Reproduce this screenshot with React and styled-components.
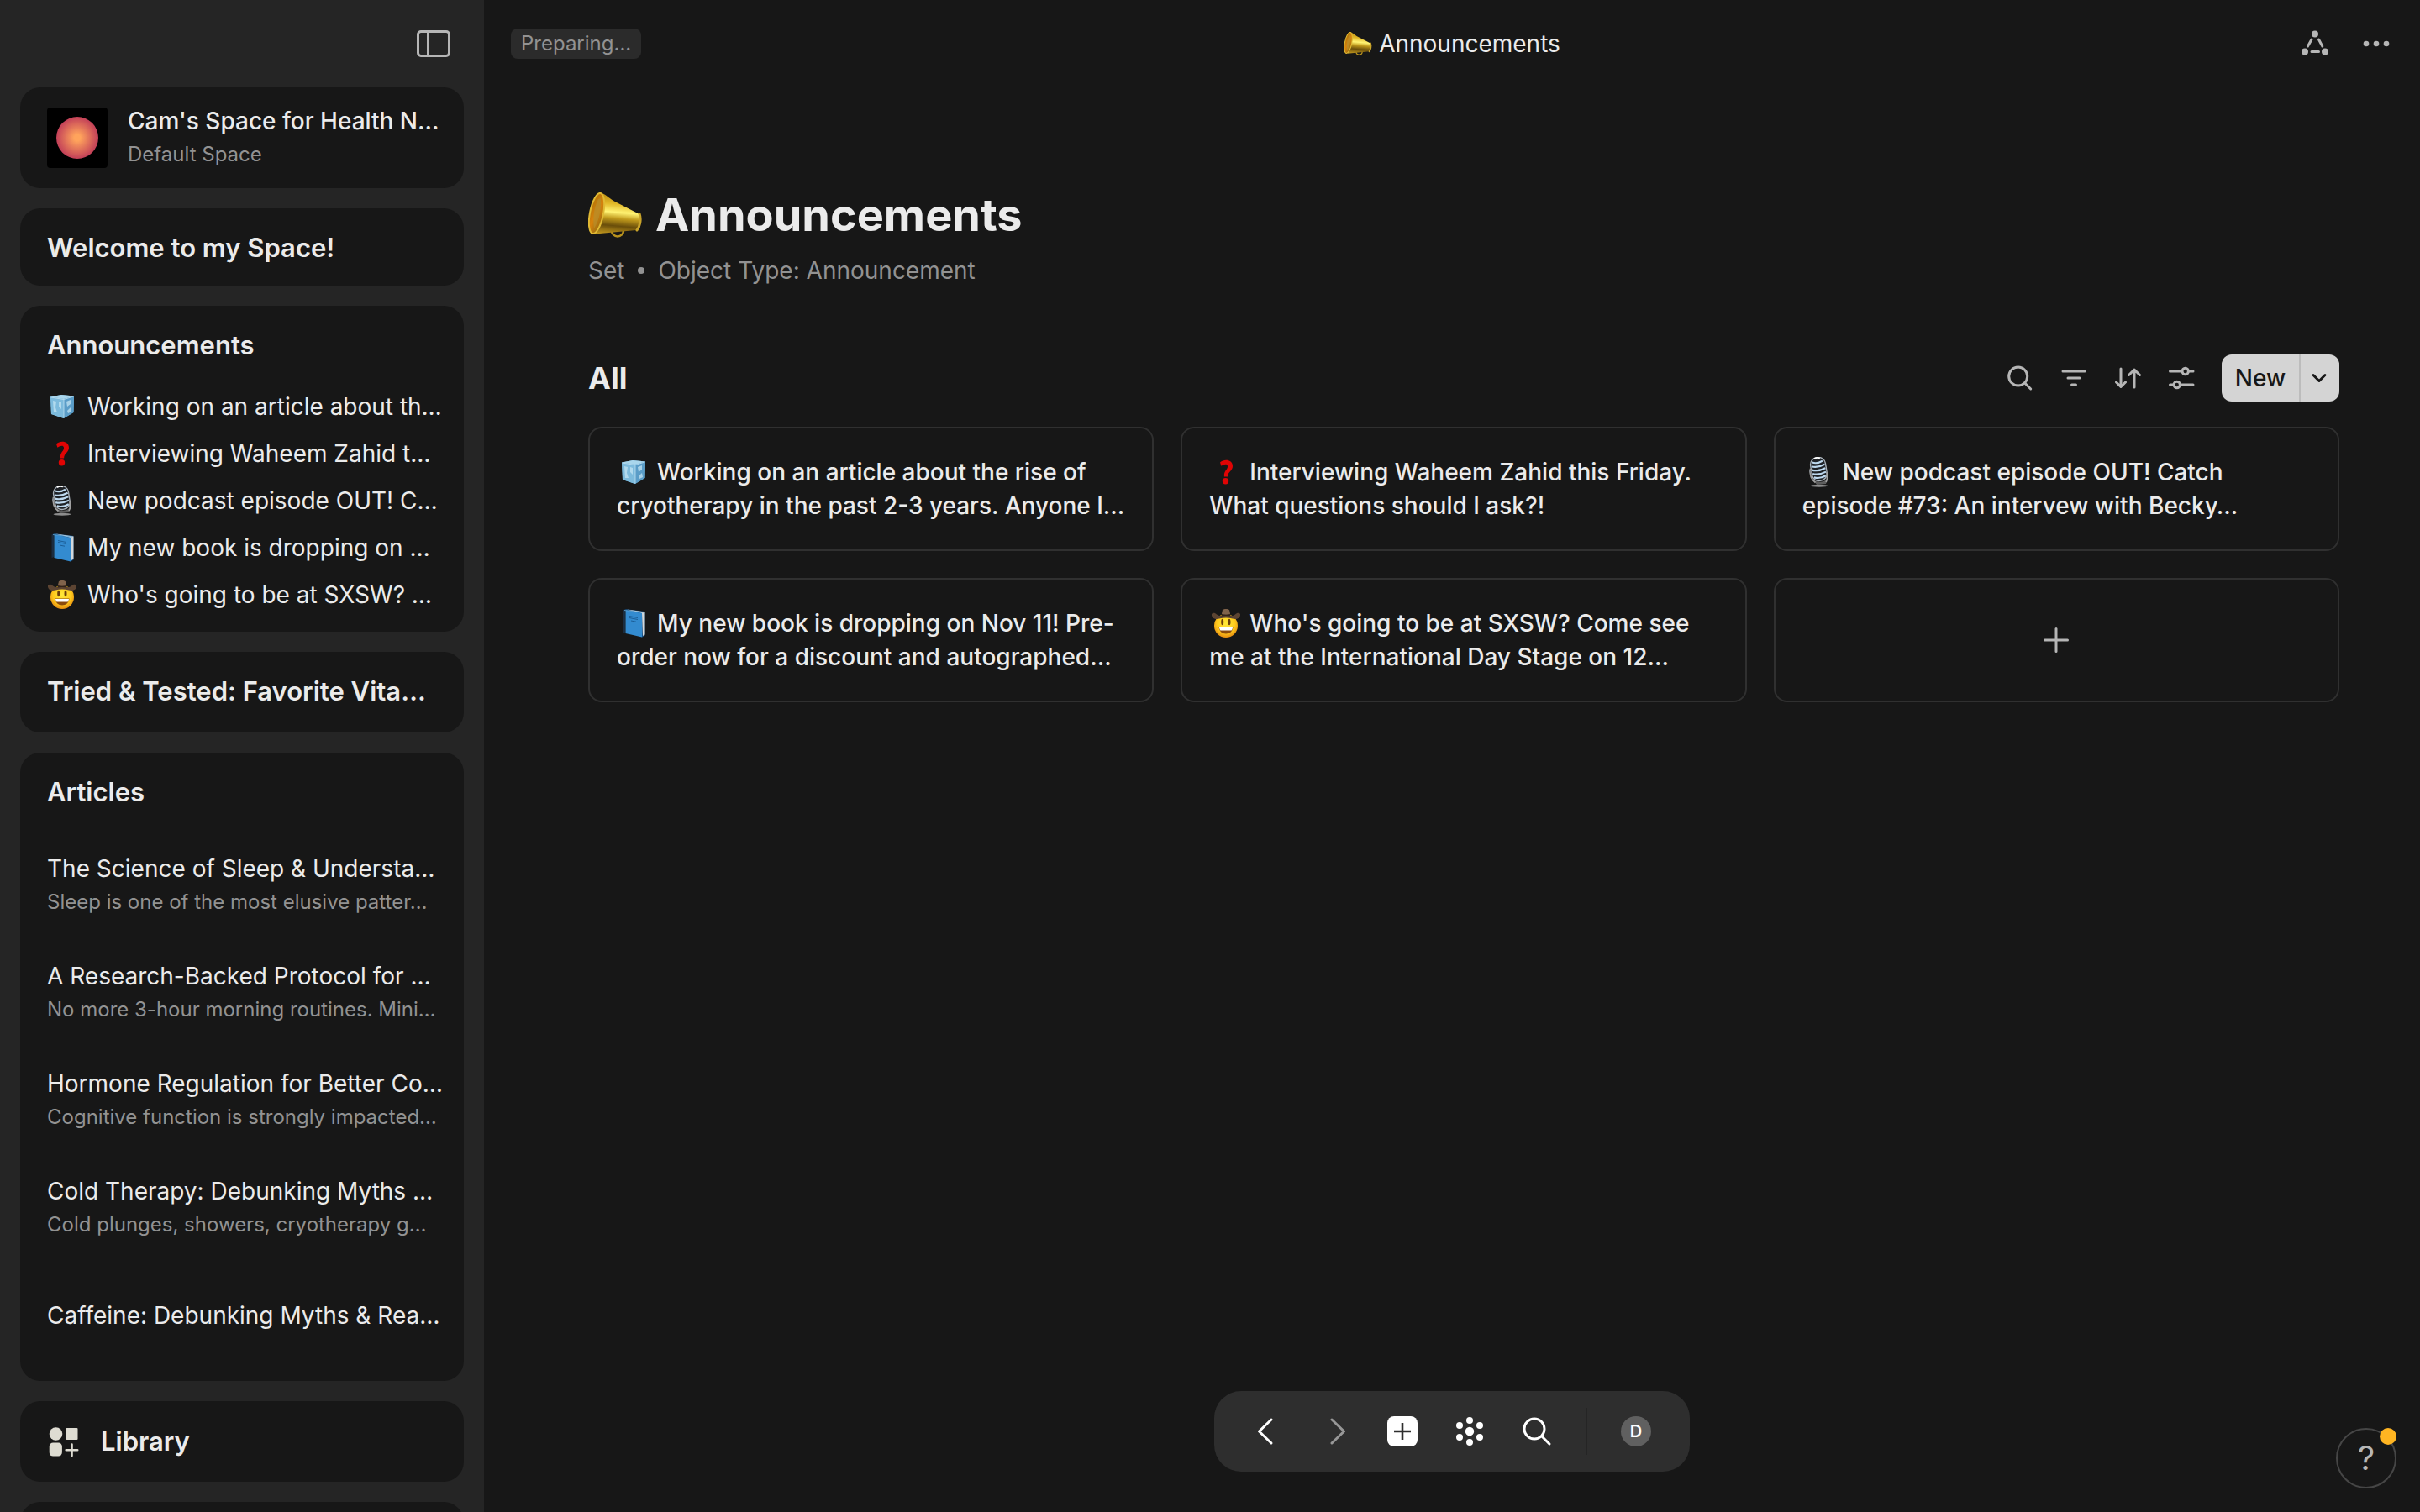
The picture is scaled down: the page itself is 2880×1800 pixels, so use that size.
import React from "react";
import styled, { createGlobalStyle } from "styled-components";

const GlobalStyle = createGlobalStyle`
  *, *::before, *::after { box-sizing: border-box; }
  body {
    margin: 0;
    background: #171717;
    color: #ebebeb;
    font-family: Inter, "Liberation Sans", sans-serif;
    font-size: 28px;
    line-height: 40px;
    -webkit-font-smoothing: antialiased;
  }
  h1, h2, h3, p, ul { margin: 0; padding: 0; }
  ul { list-style: none; }
  button { margin: 0; padding: 0; border: 0; background: none; color: inherit; font: inherit; cursor: pointer; }
  a { color: inherit; text-decoration: none; }
  svg { display: block; flex: none; }
`;

const Page = styled.div`
  display: flex;
  height: 100vh;
  overflow: hidden;
`;

const Sidebar = styled.aside`
  flex: none;
  width: 576px;
  background: #252525;
  overflow: hidden;
`;

const SidebarHead = styled.div`
  display: flex;
  align-items: center;
  justify-content: flex-end;
  height: 104px;
  padding: 0 40px;
  color: #b6b6b6;
`;

const Widgets = styled.div`
  display: flex;
  flex-direction: column;
  gap: 24px;
  padding: 0 24px;
`;

const Widget = styled.section`
  padding: 24px 20px ${(p) => p.$bottom || 24}px 32px;
  border-radius: 24px;
  background: #171717;
`;

const WidgetTitle = styled.h2`
  overflow: hidden;
  font-size: 31px;
  font-weight: 600;
  line-height: 46px;
  white-space: nowrap;
  text-overflow: ellipsis;
`;

const Truncated = styled.span`
  display: block;
  min-width: 0;
  overflow: hidden;
  white-space: nowrap;
  text-overflow: ellipsis;
`;

const SpaceLink = styled.a`
  display: flex;
  align-items: center;
  gap: 24px;
  height: 72px;
`;

const SpaceText = styled.div`
  min-width: 0;
`;

const SpaceName = styled(Truncated)`
  font-weight: 500;
`;

const Secondary = styled(Truncated)`
  color: #929292;
  font-size: 24px;
`;

const EmojiList = styled.ul`
  padding-top: 22px;
`;

const EmojiRow = styled.a`
  display: flex;
  align-items: center;
  gap: 12px;
  height: 56px;
`;

const ArticleList = styled.ul`
  padding-top: 24px;
`;

const ArticleRow = styled.a`
  display: flex;
  flex-direction: column;
  justify-content: center;
  height: 128px;
`;

const LibraryLink = styled.a`
  display: flex;
  align-items: center;
  gap: 28px;
  height: 48px;
`;

const Main = styled.main`
  position: relative;
  flex: 1;
  min-width: 0;
`;

const Header = styled.header`
  display: grid;
  grid-template-columns: 1fr auto 1fr;
  align-items: center;
  height: 104px;
  padding: 0 32px;
`;

const Status = styled.span`
  justify-self: start;
  padding: 0 12px;
  border-radius: 8px;
  background: #2b2b2b;
  color: #929292;
  font-size: 24px;
  line-height: 36px;
`;

const HeaderTitle = styled.div`
  display: flex;
  align-items: center;
  gap: 8px;
`;

const HeaderActions = styled.div`
  display: flex;
  justify-self: end;
  gap: 32px;
  color: #b6b6b6;
`;

const Content = styled.div`
  padding: 120px 96px 0 124px;
`;

const Title = styled.h1`
  display: flex;
  align-items: center;
  gap: 16px;
  font-size: 54px;
  font-weight: 700;
  line-height: 64px;
`;

const Featured = styled.p`
  display: flex;
  align-items: center;
  gap: 16px;
  padding-top: 14px;
  color: #929292;
`;

const Bullet = styled.span`
  width: 8px;
  height: 8px;
  border-radius: 50%;
  background: currentColor;
`;

const Controls = styled.div`
  display: flex;
  align-items: center;
  justify-content: space-between;
  padding-top: 80px;
`;

const ViewName = styled.h2`
  font-size: 36px;
  font-weight: 700;
`;

const Tools = styled.div`
  display: flex;
  align-items: center;
  gap: 24px;
  color: #b6b6b6;
`;

const SplitButton = styled.div`
  display: flex;
  height: 56px;
  margin-left: 4px;
  border-radius: 12px;
  background: #d4d4d4;
  color: #171717;
`;

const NewButton = styled.button`
  width: 92px;
  font-weight: 500;
`;

const NewMenu = styled.button`
  display: flex;
  align-items: center;
  justify-content: center;
  width: 48px;
  padding-right: 2px;
  border-left: 2px solid #bcbcbc;
`;

const Gallery = styled.div`
  display: grid;
  grid-template-columns: repeat(3, minmax(0, 1fr));
  gap: 32px;
  padding-top: 30px;
`;

const Card = styled.a`
  padding: 32px;
  border: 2px solid #303030;
  border-radius: 16px;
  font-weight: 500;
`;

const CardIcon = styled.span`
  display: inline-flex;
  justify-content: center;
  width: 40px;
  height: 36px;
  margin-right: 8px;
  vertical-align: -8px;
`;

const CardText = styled.span`
  display: block;
  max-height: 80px;
  overflow: hidden;
`;

const AddCard = styled.button`
  display: flex;
  align-items: center;
  justify-content: center;
  min-height: 148px;
  border: 2px solid #303030;
  border-radius: 16px;
  color: #b6b6b6;
`;

const Dock = styled.nav`
  position: absolute;
  bottom: 48px;
  left: 50%;
  display: flex;
  align-items: center;
  height: 96px;
  padding: 0 24px;
  border-radius: 32px;
  background: #2e2e2e;
  color: #ffffff;
  transform: translateX(-50%);
`;

const DockButton = styled.button`
  display: flex;
  align-items: center;
  justify-content: center;
  width: 80px;
  height: 80px;
  opacity: ${(p) => (p.$dim ? 0.5 : 1)};
`;

const DockDivider = styled.span`
  width: 2px;
  height: 56px;
  margin: 0 18px;
  background: #252525;
`;

const Avatar = styled.span`
  width: 36px;
  height: 36px;
  border-radius: 50%;
  background: #606060;
  font-size: 20px;
  font-weight: 600;
  line-height: 36px;
`;

const Help = styled.button`
  position: absolute;
  right: 28px;
  bottom: 28px;
  width: 72px;
  height: 72px;
  border: 2px solid #464646;
  border-radius: 50%;
  background: #171717;
  color: #b6b6b6;
  font-size: 40px;
`;

const HelpBadge = styled.span`
  position: absolute;
  top: -2px;
  right: -2px;
  width: 20px;
  height: 20px;
  border-radius: 50%;
  background: #ffb522;
`;

/* Icons */

function Line({ size = 40, box = 40, width = 3, children }) {
  return (
    <svg width={size} height={size} viewBox={`0 0 ${box} ${box}`} fill="none" stroke="currentColor" strokeWidth={width} strokeLinecap="round" strokeLinejoin="round" aria-hidden="true">
      {children}
    </svg>
  );
}

const SidebarIcon = () => (
  <svg width="40" height="32" viewBox="0 0 40 32" fill="none" stroke="currentColor" strokeWidth="3" aria-hidden="true">
    <rect x="1.5" y="1.5" width="37" height="29" rx="3.5" />
    <path d="M13.5 2v28" />
  </svg>
);

const SpaceIcon = () => (
  <svg width="72" height="72" viewBox="0 0 72 72" aria-hidden="true">
    <defs>
      <radialGradient id="space-orb">
        <stop offset="0.15" stopColor="#ffa35c" />
        <stop offset="1" stopColor="#c23f58" />
      </radialGradient>
    </defs>
    <rect width="72" height="72" rx="4" fill="#000" />
    <circle cx="36" cy="36" r="25" fill="url(#space-orb)" />
  </svg>
);

const LibraryIcon = () => (
  <svg width="36" height="36" viewBox="0 0 36 36" fill="#dedcd2" overflow="visible" aria-hidden="true">
    <circle cx="10.500" cy="9" r="7.800" />
    <rect x="22.500" y="2" width="14" height="14" rx="1" />
    <rect x="2.700" y="19.500" width="15.200" height="16" rx="4.500" />
    <path d="M29.500 21.500v13.500M22.700 28.200h13.500" stroke="#dedcd2" strokeWidth="2.600" strokeLinecap="round" />
  </svg>
);

const Search = () => (
  <Line>
    <circle cx="17.700" cy="18" r="11" />
    <path d="M25.700 26l7 7" />
  </Line>
);

const Filter = () => (
  <Line><path d="M7 12h26M13 20h14M17.500 28h5" /></Line>
);

const Sort = () => (
  <Line><path d="M12 9v21M6.500 25l5.500 5.500L17.500 25M28 31V10M21.500 16.500L28 10l6.500 6.500" /></Line>
);

const Sliders = () => (
  <Line>
    <path d="M6.500 12h14M29 12h5M6.500 28h4.500M19 28h15" />
    <circle cx="24.700" cy="12" r="3.700" />
    <circle cx="14.700" cy="28" r="3.700" />
  </Line>
);

const GraphIcon = () => (
  <svg width="40" height="40" viewBox="0 0 40 40" fill="currentColor" stroke="currentColor" strokeWidth="3" strokeLinecap="round" aria-hidden="true">
    <g stroke="none">
      <circle cx="19" cy="8.500" r="4" />
      <circle cx="7" cy="29.500" r="4" />
      <circle cx="31" cy="29.500" r="4" />
    </g>
    <path d="M15 15l-4.500 8M23.500 15l4.300 8M15 29.500h8.500" />
  </svg>
);

const DotsIcon = () => (
  <svg width="40" height="40" viewBox="0 0 40 40" fill="currentColor" aria-hidden="true">
    <circle cx="8" cy="20" r="3.300" />
    <circle cx="20" cy="20" r="3.300" />
    <circle cx="32" cy="20" r="3.300" />
  </svg>
);

const AddIcon = () => (
  <svg width="36" height="36" viewBox="0 0 36 36" aria-hidden="true">
    <rect width="36" height="36" rx="8" fill="#fff" />
    <path d="M18 8v20M8 18h20" stroke="#2e2e2e" strokeWidth="2.600" />
  </svg>
);

const SpacesIcon = () => (
  <svg width="36" height="36" viewBox="0 0 36 36" fill="#fff" aria-hidden="true">
    <circle cx="18" cy="18" r="5.200" />
    {[[18, 5], [30, 11], [30, 25], [18, 31], [6, 25], [6, 11]].map(([x, y]) => (
      <circle key={`${x}-${y}`} cx={x} cy={y} r="4" />
    ))}
  </svg>
);

/* Emoji drawings */

const Megaphone = ({ width, height }) => (
  <svg width={width} height={height} viewBox="0 0 64 54" aria-hidden="true">
    <defs>
      <linearGradient id="mega-cone" x1="0.300" y1="0" x2="0.200" y2="1">
        <stop offset="0" stopColor="#b98a10" />
        <stop offset="0.250" stopColor="#e2b828" />
        <stop offset="0.450" stopColor="#fff374" />
        <stop offset="0.600" stopColor="#c19a1c" />
        <stop offset="0.780" stopColor="#6a4e0a" />
        <stop offset="1" stopColor="#c2981e" />
      </linearGradient>
      <linearGradient id="mega-bell" x1="0" y1="0" x2="1" y2="1">
        <stop offset="0" stopColor="#a46f08" />
        <stop offset="0.500" stopColor="#d8820c" />
        <stop offset="1" stopColor="#8a6a14" />
      </linearGradient>
    </defs>
    <circle cx="35" cy="45.500" r="7" fill="none" stroke="#b8921e" strokeWidth="2.600" />
    <path d="M15 0.500C20 2 24 6 30 10L60 25.500C62 30 61 41 57 45L8 49.500Z" fill="url(#mega-cone)" />
    <ellipse cx="10" cy="25" rx="8" ry="24.500" transform="rotate(11 10 25)" fill="url(#mega-bell)" stroke="#e0b934" strokeWidth="2" />
    <path d="M12 8C7 18 5 30 7 43C13 34 16 20 15 7Z" fill="#b58f2c" opacity="0.700" />
    <path d="M61 25.500C63.500 32 61.500 41 58 45" fill="none" stroke="#c9a42a" strokeWidth="3" strokeLinecap="round" />
  </svg>
);

const Emoji = ({ children }) => (
  <svg width="36" height="36" viewBox="0 0 36 36" aria-hidden="true">{children}</svg>
);

const Ice = () => (
  <Emoji>
    <path d="M4 6.500L17 4l15 1.500L31.500 25l-12 7L5 27Z" fill="#6fb0d6" />
    <path d="M4 6.500L17 4l15 1.500L20 9Z" fill="#a9d6ec" />
    <path d="M4 6.500L20 9v23L5 27Z" fill="#7dbbdd" />
    <path d="M20 9l12-3.500L31.500 25l-11.500 7Z" fill="#5a9dc8" />
    <path d="M7 11l4 1 -1 7 2 6-4 0ZM14 12l3 1v8l-3-3ZM23 12l5-2v5l-4 3ZM24 23l4-4 1 5-4 2Z" fill="#c3e4f3" opacity="0.750" />
    <path d="M20 9.500v22M4.500 7l15.500 2.500L31.500 6" fill="none" stroke="#bfe1f2" strokeWidth="0.800" />
  </Emoji>
);

const Question = () => (
  <Emoji>
    <path d="M11 6.500C16 1.800 26 3 26 11c0 5.500-5.600 6-5.900 12.500h-4.200C15.300 15.500 20.500 15.500 20 10.800 19.500 7.500 15.500 8.500 12.400 10.800Z" fill="#e00404" />
    <circle cx="17.500" cy="28.700" r="3.700" fill="#e00404" />
  </Emoji>
);

const Mic = () => (
  <Emoji>
    <ellipse cx="18" cy="34.300" rx="10.500" ry="1.500" fill="#8d8d8d" />
    <path d="M10 26c4 5 14 5.500 18-1l-2 7-11 1Z" fill="#5d5d5d" />
    <g transform="rotate(-9 17 15)">
      <rect x="8.500" y="0.500" width="18" height="28" rx="8.500" fill="#1f2226" stroke="#a8b0b8" strokeWidth="1.400" />
      <path d="M11 5.500q6 3 12.500 0M9.500 10q7 3 16 0M9.500 14.500q7 3 16 0M9.500 19q7 3 16 0M10.500 23.500q7 3 14 0" fill="none" stroke="#bdd8ee" strokeWidth="2.200" />
      <path d="M14 1.500q4-1.500 7 .500" fill="none" stroke="#fff" strokeWidth="1.800" />
    </g>
    <path d="M7.500 14c-1 7 1 13 6 16.500M27 18c1 5 1 9-1 12" fill="none" stroke="#a0a0a0" strokeWidth="1.800" />
    <circle cx="8" cy="17" r="2" fill="#85898e" />
  </Emoji>
);

const Book = () => (
  <Emoji>
    <path d="M5.500 2.500l2.500-1.500v28l-2.500 1.200Z" fill="#1b2d40" />
    <path d="M8 1l23.500 3v28.500l-3.500 2.300Z" fill="#174f82" />
    <path d="M10 1.500l21.500 3v27l-2.500 1.500L28 6Z" fill="#d4d8da" />
    <path d="M8.500 2.500L28 6v28.500L8.500 30Z" fill="#338bd0" />
    <path d="M7 2.500L30 5" stroke="#62ace0" strokeWidth="0.800" />
    <path d="M13 9.500l10 2M13 11.500l10 2M15 15l6 1.200" stroke="#1c5e97" strokeWidth="1" />
  </Emoji>
);

const Cowboy = () => (
  <Emoji>
    <defs>
      <radialGradient id="cowboy-face" cx="0.500" cy="0.400" r="0.600">
        <stop offset="0" stopColor="#ffe93a" />
        <stop offset="0.650" stopColor="#ffc91c" />
        <stop offset="1" stopColor="#e58c10" />
      </radialGradient>
    </defs>
    <circle cx="18" cy="21" r="14" fill="url(#cowboy-face)" />
    <path d="M1 7c1.500-2 4-1.500 6 .500 2 1.500 4 1.700 5.500 1.500L14 2.500c1.500-2 6.500-2 8 0L23.500 9c2 .200 4-.200 5.500-1.500 2-2 4.500-2.500 6-.500.500 5-4 7-9 5.500-5-1.500-11-1.500-16 0-5 1.500-9.500-.500-9-5.500Z" fill="#5c4432" />
    <path d="M14 2.500c1.500-2 6.500-2 8 0l1 4.500c-3 1-7 1-10 0Z" fill="#80634b" />
    <path d="M13 7c3 1 7 1 10 0l.500 2.500c-3-.700-8-.700-11 0Z" fill="#33241a" />
    <ellipse cx="13.700" cy="16.500" rx="1.500" ry="3.800" fill="#6b3e0a" />
    <ellipse cx="22" cy="16.500" rx="1.500" ry="3.800" fill="#6b3e0a" />
    <path d="M9.500 22.500h17c-.500 5-4 8-8.500 8s-8-3-8.500-8Z" fill="#8a4a0c" />
    <path d="M10 23h16c-.300 2-.800 3-1.500 3.500H11.500C10.800 26 10.300 25 10 23Z" fill="#fff" />
  </Emoji>
);

/* Data */

const announcements = [
  { Icon: Ice, short: "Working on an article about th…", text: "Working on an article about the rise of cryotherapy in the past 2-3 years. Anyone I…" },
  { Icon: Question, short: "Interviewing Waheem Zahid t…", text: "Interviewing Waheem Zahid this Friday. What questions should I ask?!" },
  { Icon: Mic, short: "New podcast episode OUT! C…", text: "New podcast episode OUT! Catch episode #73: An intervew with Becky…" },
  { Icon: Book, short: "My new book is dropping on …", text: "My new book is dropping on Nov 11! Pre-order now for a discount and autographed…" },
  { Icon: Cowboy, short: "Who's going to be at SXSW? …", text: "Who's going to be at SXSW? Come see me at the International Day Stage on 12…" },
];

const articles = [
  { title: "The Science of Sleep & Understa…", text: "Sleep is one of the most elusive patter…" },
  { title: "A Research-Backed Protocol for …", text: "No more 3-hour morning routines. Mini…" },
  { title: "Hormone Regulation for Better Co…", text: "Cognitive function is strongly impacted…" },
  { title: "Cold Therapy: Debunking Myths …", text: "Cold plunges, showers, cryotherapy g…" },
  { title: "Caffeine: Debunking Myths & Rea…" },
];

export default function App() {
  return (
    <Page>
      <GlobalStyle />
      <Sidebar>
        <SidebarHead>
          <button aria-label="Toggle sidebar"><SidebarIcon /></button>
        </SidebarHead>
        <Widgets>
          <Widget>
            <SpaceLink href="#space">
              <SpaceIcon />
              <SpaceText>
                <SpaceName>Cam's Space for Health N…</SpaceName>
                <Secondary>Default Space</Secondary>
              </SpaceText>
            </SpaceLink>
          </Widget>
          <Widget $bottom={22}>
            <WidgetTitle>Welcome to my Space!</WidgetTitle>
          </Widget>
          <Widget $bottom={16}>
            <WidgetTitle>Announcements</WidgetTitle>
            <EmojiList>
              {announcements.map(({ Icon, short }) => (
                <li key={short}>
                  <EmojiRow href="#announcement"><Icon /><Truncated>{short}</Truncated></EmojiRow>
                </li>
              ))}
            </EmojiList>
          </Widget>
          <Widget $bottom={26}>
            <WidgetTitle>Tried &amp; Tested: Favorite Vita…</WidgetTitle>
          </Widget>
          <Widget $bottom={14}>
            <WidgetTitle>Articles</WidgetTitle>
            <ArticleList>
              {articles.map(({ title, text }) => (
                <li key={title}>
                  <ArticleRow href="#article">
                    <Truncated>{title}</Truncated>
                    {text && <Secondary>{text}</Secondary>}
                  </ArticleRow>
                </li>
              ))}
            </ArticleList>
          </Widget>
          <Widget>
            <LibraryLink href="#library">
              <LibraryIcon />
              <WidgetTitle>Library</WidgetTitle>
            </LibraryLink>
          </Widget>
          <Widget />
        </Widgets>
      </Sidebar>

      <Main>
        <Header>
          <Status>Preparing...</Status>
          <HeaderTitle><Megaphone width={34} height={28} />Announcements</HeaderTitle>
          <HeaderActions>
            <button aria-label="Graph"><GraphIcon /></button>
            <button aria-label="More"><DotsIcon /></button>
          </HeaderActions>
        </Header>

        <Content>
          <Title><Megaphone width={64} height={54} />Announcements</Title>
          <Featured><span>Set</span><Bullet /><span>Object Type: Announcement</span></Featured>

          <Controls>
            <ViewName>All</ViewName>
            <Tools>
              <button aria-label="Search"><Search /></button>
              <button aria-label="Filter"><Filter /></button>
              <button aria-label="Sort"><Sort /></button>
              <button aria-label="Settings"><Sliders /></button>
              <SplitButton>
                <NewButton>New</NewButton>
                <NewMenu aria-label="New object options">
                  <Line size={20} box={20}><path d="M3 6.500l7 7 7-7" /></Line>
                </NewMenu>
              </SplitButton>
            </Tools>
          </Controls>

          <Gallery>
            {announcements.map(({ Icon, text }) => (
              <Card key={text} href="#announcement">
                <CardText><CardIcon><Icon /></CardIcon>{text}</CardText>
              </Card>
            ))}
            <AddCard aria-label="Add object">
              <Line><path d="M20 6.500v27M6.500 20h27" /></Line>
            </AddCard>
          </Gallery>
        </Content>

        <Dock aria-label="Navigation">
          <DockButton aria-label="Back"><Line><path d="M24 6L9.500 20 24 34" /></Line></DockButton>
          <DockButton aria-label="Forward" $dim><Line><path d="M16 6L30.500 20 16 34" /></Line></DockButton>
          <DockButton aria-label="Create"><AddIcon /></DockButton>
          <DockButton aria-label="Spaces"><SpacesIcon /></DockButton>
          <DockButton aria-label="Search">
            <Line><circle cx="17" cy="17" r="12" /><path d="M26 26l9 9" /></Line>
          </DockButton>
          <DockDivider />
          <DockButton aria-label="Profile"><Avatar>D</Avatar></DockButton>
        </Dock>

        <Help aria-label="Help">?<HelpBadge /></Help>
      </Main>
    </Page>
  );
}
